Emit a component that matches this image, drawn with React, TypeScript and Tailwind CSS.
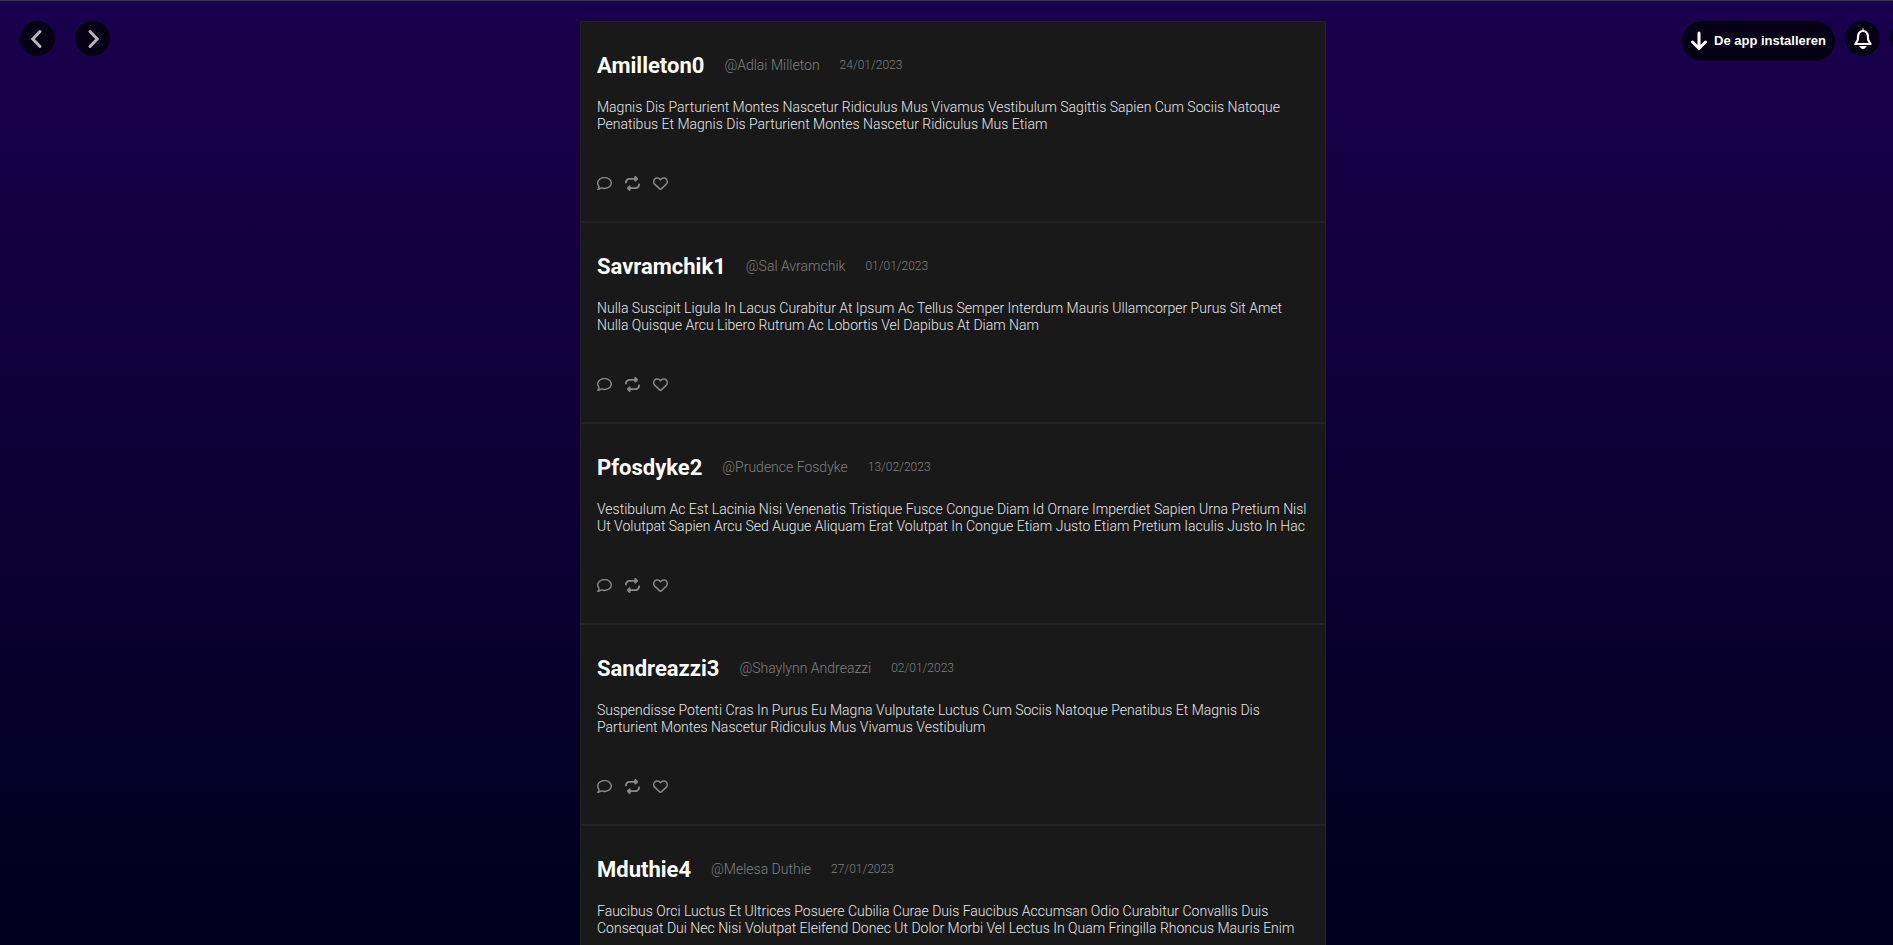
import React from 'react';
import { FaRegComment, FaRepeat, FaRegHeart } from 'react-icons/fa6';

interface Post {
  name: string;
  handle: string;
  date: string;
  text: string;
}

const posts: Post[] = [
  {
    name: 'Amilleton0',
    handle: '@Adlai Milleton',
    date: '24/01/2023',
    text: 'Magnis Dis Parturient Montes Nascetur Ridiculus Mus Vivamus Vestibulum Sagittis Sapien Cum Sociis Natoque Penatibus Et Magnis Dis Parturient Montes Nascetur Ridiculus Mus Etiam',
  },
  {
    name: 'Savramchik1',
    handle: '@Sal Avramchik',
    date: '01/01/2023',
    text: 'Nulla Suscipit Ligula In Lacus Curabitur At Ipsum Ac Tellus Semper Interdum Mauris Ullamcorper Purus Sit Amet Nulla Quisque Arcu Libero Rutrum Ac Lobortis Vel Dapibus At Diam Nam',
  },
  {
    name: 'Pfosdyke2',
    handle: '@Prudence Fosdyke',
    date: '13/02/2023',
    text: 'Vestibulum Ac Est Lacinia Nisi Venenatis Tristique Fusce Congue Diam Id Ornare Imperdiet Sapien Urna Pretium Nisl Ut Volutpat Sapien Arcu Sed Augue Aliquam Erat Volutpat In Congue Etiam Justo Etiam Pretium Iaculis Justo In Hac',
  },
  {
    name: 'Sandreazzi3',
    handle: '@Shaylynn Andreazzi',
    date: '02/01/2023',
    text: 'Suspendisse Potenti Cras In Purus Eu Magna Vulputate Luctus Cum Sociis Natoque Penatibus Et Magnis Dis Parturient Montes Nascetur Ridiculus Mus Vivamus Vestibulum',
  },
  {
    name: 'Mduthie4',
    handle: '@Melesa Duthie',
    date: '27/01/2023',
    text: 'Faucibus Orci Luctus Et Ultrices Posuere Cubilia Curae Duis Faucibus Accumsan Odio Curabitur Convallis Duis Consequat Dui Nec Nisi Volutpat Eleifend Donec Ut Dolor Morbi Vel Lectus In Quam Fringilla Rhoncus Mauris Enim',
  },
];

function RoundButton({ label, children }: { label: string; children?: React.ReactNode }) {
  return (
    <button
      aria-label={label}
      className="flex size-[35px] shrink-0 items-center justify-center rounded-full bg-[#050014] text-white"
    >
      {children}
    </button>
  );
}

function Chevron({ d }: { d: string }) {
  return (
    <svg viewBox="0 0 20 20" className="size-5 text-[#b8b5bd]" fill="none" stroke="currentColor" strokeWidth="3" strokeLinecap="round" strokeLinejoin="miter">
      <path d={d} />
    </svg>
  );
}

function PostCard({ post }: { post: Post }) {
  return (
    <article className="border border-[#232323] bg-[#191919] px-4 pt-[29px] pb-[30px]">
      <header className="flex h-7 items-center gap-5">
        <h2 className="text-[22px] font-bold text-white">{post.name}</h2>
        <span className="text-sm font-light text-[#808080]">{post.handle}</span>
        <span className="text-xs font-light text-[#808080]">{post.date}</span>
      </header>
      <p className="mt-5 h-[34px] text-sm leading-[17px] font-light text-[#e8e8e8]">{post.text}</p>
      <div className="mt-[43px] flex gap-[13px] text-[15px] text-[#8a8a8a]">
        <button aria-label="Comment">
          <FaRegComment />
        </button>
        <button aria-label="Repost">
          <FaRepeat />
        </button>
        <button aria-label="Like">
          <FaRegHeart />
        </button>
      </div>
    </article>
  );
}

function App() {
  return (
    <div className="h-screen overflow-hidden border-t border-[#3c3c3c] bg-linear-to-b/srgb from-[#1a004d] to-[#00001e] pt-5 font-['Roboto',sans-serif]">
      <div className="grid grid-cols-[1fr_746px_1fr] pl-[13px]">
        <nav className="flex items-start gap-5 pl-[7px]">
          <RoundButton label="Back">
            <Chevron d="M12 2.5 L4.8 10 L12 17.5" />
          </RoundButton>
          <RoundButton label="Forward">
            <Chevron d="M7 2.5 L14.2 10 L7 17.5" />
          </RoundButton>
        </nav>
        <main>
          {posts.map((post) => (
            <PostCard key={post.name} post={post} />
          ))}
        </main>
        <div className="-mr-8 flex items-start justify-end gap-[10px]">
          <button className="flex h-10 shrink-0 items-center gap-[6px] rounded-full bg-[#050014] pr-[9px] pl-2 font-['Liberation_Sans',sans-serif] text-[13px] font-bold text-white">
            <svg viewBox="0 0 18 20" className="h-5 w-[18px]" fill="none" stroke="currentColor" strokeWidth="3" strokeLinecap="round">
              <path d="M9 2 V17 M2.5 11 L9 17.5 L15.5 11" />
            </svg>
            De app installeren
          </button>
          <RoundButton label="Notifications">
            <svg viewBox="0 0 18 22" className="h-[22px] w-[18px]" fill="none" stroke="currentColor" strokeWidth="2.2">
              <path d="M9 3 C5.5 3 4.3 5.5 4.1 8.5 L3.8 12 L1.4 16 H16.6 L14.2 12 L13.9 8.5 C13.7 5.5 12.5 3 9 3 Z" strokeLinejoin="round" />
              <path d="M6.2 18.5 H11.8 Q9 22.5 6.2 18.5 Z M9 0.5 V3" fill="currentColor" strokeWidth="1.2" />
            </svg>
          </RoundButton>
          <RoundButton label="Profile" />
        </div>
      </div>
    </div>
  );
}

export default App;
